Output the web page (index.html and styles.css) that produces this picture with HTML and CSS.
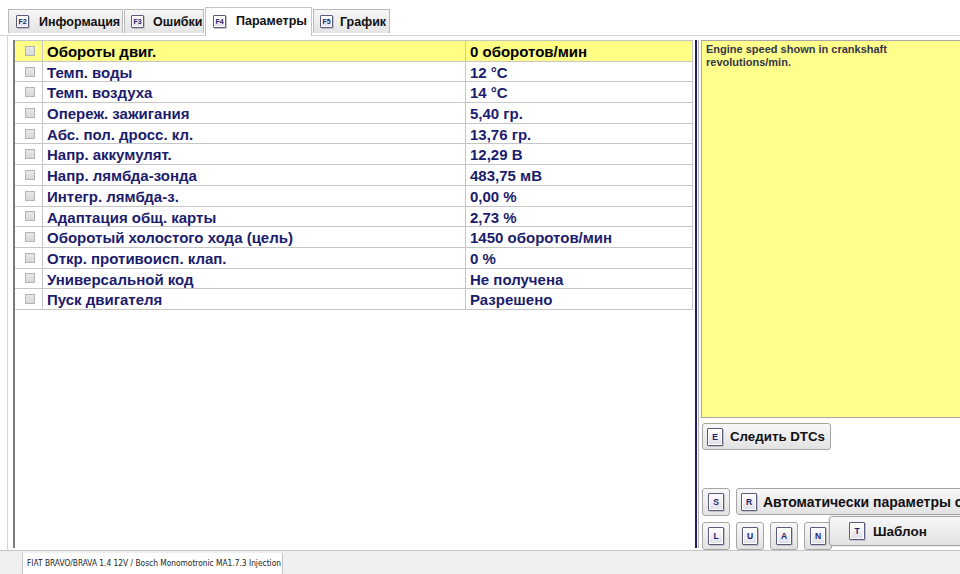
FILE: index.html
```html
<!DOCTYPE html>
<html>
<head>
<meta charset="utf-8">
<link rel="stylesheet" href="styles.css">
</head>
<body>
<div class="app">
  <div class="tabs">
    <div class="tab t1"><span class="key">F2</span><span>Информация</span></div>
    <div class="tab t2"><span class="key">F3</span><span>Ошибки</span></div>
    <div class="tab t3 active"><span class="key">F4</span><span>Параметры</span></div>
    <div class="tab t4"><span class="key">F5</span><span>График</span></div>
  </div>
  <div class="main">
    <div class="left">
      <div class="list">
        <div class="table">
          <div class="row sel"><div class="cb"><i></i></div><div class="c">Обороты двиг.</div><div class="c">0 оборотов/мин</div></div>
          <div class="row"><div class="cb"><i></i></div><div class="c">Темп. воды</div><div class="c">12 °C</div></div>
          <div class="row"><div class="cb"><i></i></div><div class="c">Темп. воздуха</div><div class="c">14 °C</div></div>
          <div class="row"><div class="cb"><i></i></div><div class="c">Опереж. зажигания</div><div class="c">5,40 гр.</div></div>
          <div class="row"><div class="cb"><i></i></div><div class="c">Абс. пол. дросс. кл.</div><div class="c">13,76 гр.</div></div>
          <div class="row"><div class="cb"><i></i></div><div class="c">Напр. аккумулят.</div><div class="c">12,29 В</div></div>
          <div class="row"><div class="cb"><i></i></div><div class="c">Напр. лямбда-зонда</div><div class="c">483,75 мВ</div></div>
          <div class="row"><div class="cb"><i></i></div><div class="c">Интегр. лямбда-з.</div><div class="c">0,00 %</div></div>
          <div class="row"><div class="cb"><i></i></div><div class="c">Адаптация общ. карты</div><div class="c">2,73 %</div></div>
          <div class="row"><div class="cb"><i></i></div><div class="c">Оборотый холостого хода (цель)</div><div class="c">1450 оборотов/мин</div></div>
          <div class="row"><div class="cb"><i></i></div><div class="c">Откр. противоисп. клап.</div><div class="c">0 %</div></div>
          <div class="row"><div class="cb"><i></i></div><div class="c">Универсальной код</div><div class="c">Не получена</div></div>
          <div class="row"><div class="cb"><i></i></div><div class="c">Пуск двигателя</div><div class="c">Разрешено</div></div>
        </div>
      </div>
    </div>
    <div class="divider"></div>
    <div class="right">
      <div class="desc">Engine speed shown in crankshaft<br>revolutions/min.</div>
      <div class="btn dtc"><span class="key big">E</span><span>Следить DTCs</span></div>
      <div class="btnrow r1">
        <div class="btn sq"><span class="key big">S</span></div>
        <div class="btn wide"><span class="key big">R</span><span>Автоматически параметры свойства</span></div>
      </div>
      <div class="btnrow r2">
        <div class="btn sq"><span class="key big">L</span></div>
        <div class="btn sq"><span class="key big">U</span></div>
        <div class="btn sq"><span class="key big">A</span></div>
        <div class="btn sq"><span class="key big">N</span></div>
      </div>
      <div class="btn popup"><span class="key big">T</span><span>Шаблон</span></div>
    </div>
  </div>
  <div class="status">
    <div class="spanel">FIAT BRAVO/BRAVA 1.4 12V / Bosch Monomotronic MA1.7.3 Injection</div>
  </div>
</div>
</body>
</html>
```

FILE: styles.css
```css
* { box-sizing: border-box; }
html, body { margin: 0; padding: 0; background: #fff; }
body { width: 960px; height: 574px; overflow: hidden; font-family: "Liberation Sans", Arial, sans-serif; }
.app { width: 960px; height: 574px; display: flex; flex-direction: column; overflow: hidden; }

.tabs { height: 36px; flex: none; display: flex; align-items: flex-end; padding-left: 8px; border-bottom: 1px solid #d2d2d2; }
.tab { height: 24px; margin-bottom: 2px; display: flex; align-items: center; gap: 10px; padding: 0 0 0 7px;
  background: linear-gradient(#f6f6f6, #e4e4e4); border: 1px solid #b9b9b9; border-bottom: none;
  font-weight: bold; font-size: 12.5px; color: #111; margin-right: 1px; white-space: nowrap; flex: none; }
.t1 { width: 115px; }
.t2 { width: 80px; gap: 9px; padding-left: 6px; }
.t3 { width: 107px; }
.t4 { width: 77px; gap: 7px; padding-left: 6px; }
.tab.active { height: 29px; margin-bottom: -1px; background: #fff; border-color: #c4c4c4; padding-bottom: 2px; }

.key { display: inline-flex; align-items: center; justify-content: center; width: 13px; height: 13px; flex: none;
  border: 1px solid #5a5a7e; border-radius: 1px; background: linear-gradient(#ffffff, #dedeea);
  box-shadow: inset 0 0 0 1px #fff, 1px 1px 0 #c4c4c4; font: bold 7px "Liberation Sans", Arial, sans-serif; color: #1e1e6a; }
.key.big { width: 16px; height: 18px; font-size: 8.5px; }

.main { height: 514px; flex: none; display: flex; }
.left { width: 688px; flex: none; margin-left: 7px; border-left: 1px solid #d4d4d4; padding: 4px 0 2px 5px; }
.list { height: 100%; border-left: 2px solid #7c7c7c; }
.table { width: 678px; border-top: 1px solid #c6c6c6; border-right: 1px solid #c6c6c6; }
.row { display: grid; grid-template-columns: 27px 423px 228px; height: 20.7px; border-bottom: 1px solid #c6c6c6;
  font-weight: bold; font-size: 15px; color: #1c1c6c; }
.row.sel { background: #ffff86; color: #000; }
.c { border-left: 1px solid #c6c6c6; padding-left: 4px; line-height: 21px; white-space: nowrap; overflow: hidden; }
.cb { display: flex; align-items: center; justify-content: center; padding-left: 2px; }
.cb i { width: 10px; height: 10px; border: 1px solid #b4b4b4; background: linear-gradient(#e8e8e8, #d8d8d8); }

.divider { width: 5px; flex: none; margin: 4px 0 2px; background: linear-gradient(to right, #1c1c6a 0, #1c1c6a 2px, #fff 2px, #fff 3px, #b0b0b0 3px, #b0b0b0 4px, #fff 4px); }

.right { position: relative; width: 300px; flex: none; padding-top: 4px; }
.desc { width: 300px; height: 378px; margin-left: 1px; border: 1px solid #a8a8a8; background: #ffff8c;
  padding: 2px 4px; font-weight: bold; font-size: 11px; line-height: 13px; color: #363648; }

.btn { display: flex; align-items: center; gap: 7px; height: 27px; padding: 0 4px; border: 1px solid #a6a6a6; border-radius: 3px;
  background: linear-gradient(#f8f8f8, #e2e2e2); font-weight: bold; font-size: 13.3px; color: #111; white-space: nowrap; flex: none; }
.dtc { width: 129px; margin: 5px 0 0 2px; }
.btnrow { display: flex; gap: 6px; margin-left: 2px; }
.r1 { margin-top: 38px; align-items: flex-start; }
.r1 .sq { height: 28px; }
.r1 .wide { height: 27px; width: 290px; padding-left: 4px; font-size: 14px; gap: 6px; }
.r2 { margin-top: 6px; }
.sq { width: 28px; justify-content: center; padding: 0; height: 28px; }
.popup { position: absolute; left: 129px; top: 480px; width: 160px; height: 30px; padding-left: 19px; gap: 8px;
  box-shadow: 0 0 2px rgba(0,0,0,0.25); font-size: 13.5px; }

.status { flex: 1; background: #f0f0f0; border-top: 1px solid #c4c4c4; padding: 2px 0 0 22px; }
.spanel { width: 261px; height: 21px; background: #fff; border-left: 1px solid #c6c6c6; border-right: 1px solid #c6c6c6;
  font-family: "DejaVu Sans Condensed", "Liberation Sans", sans-serif; font-size: 8.3px; color: #222; padding-left: 4px; line-height: 20px; white-space: nowrap; overflow: hidden; }
```
